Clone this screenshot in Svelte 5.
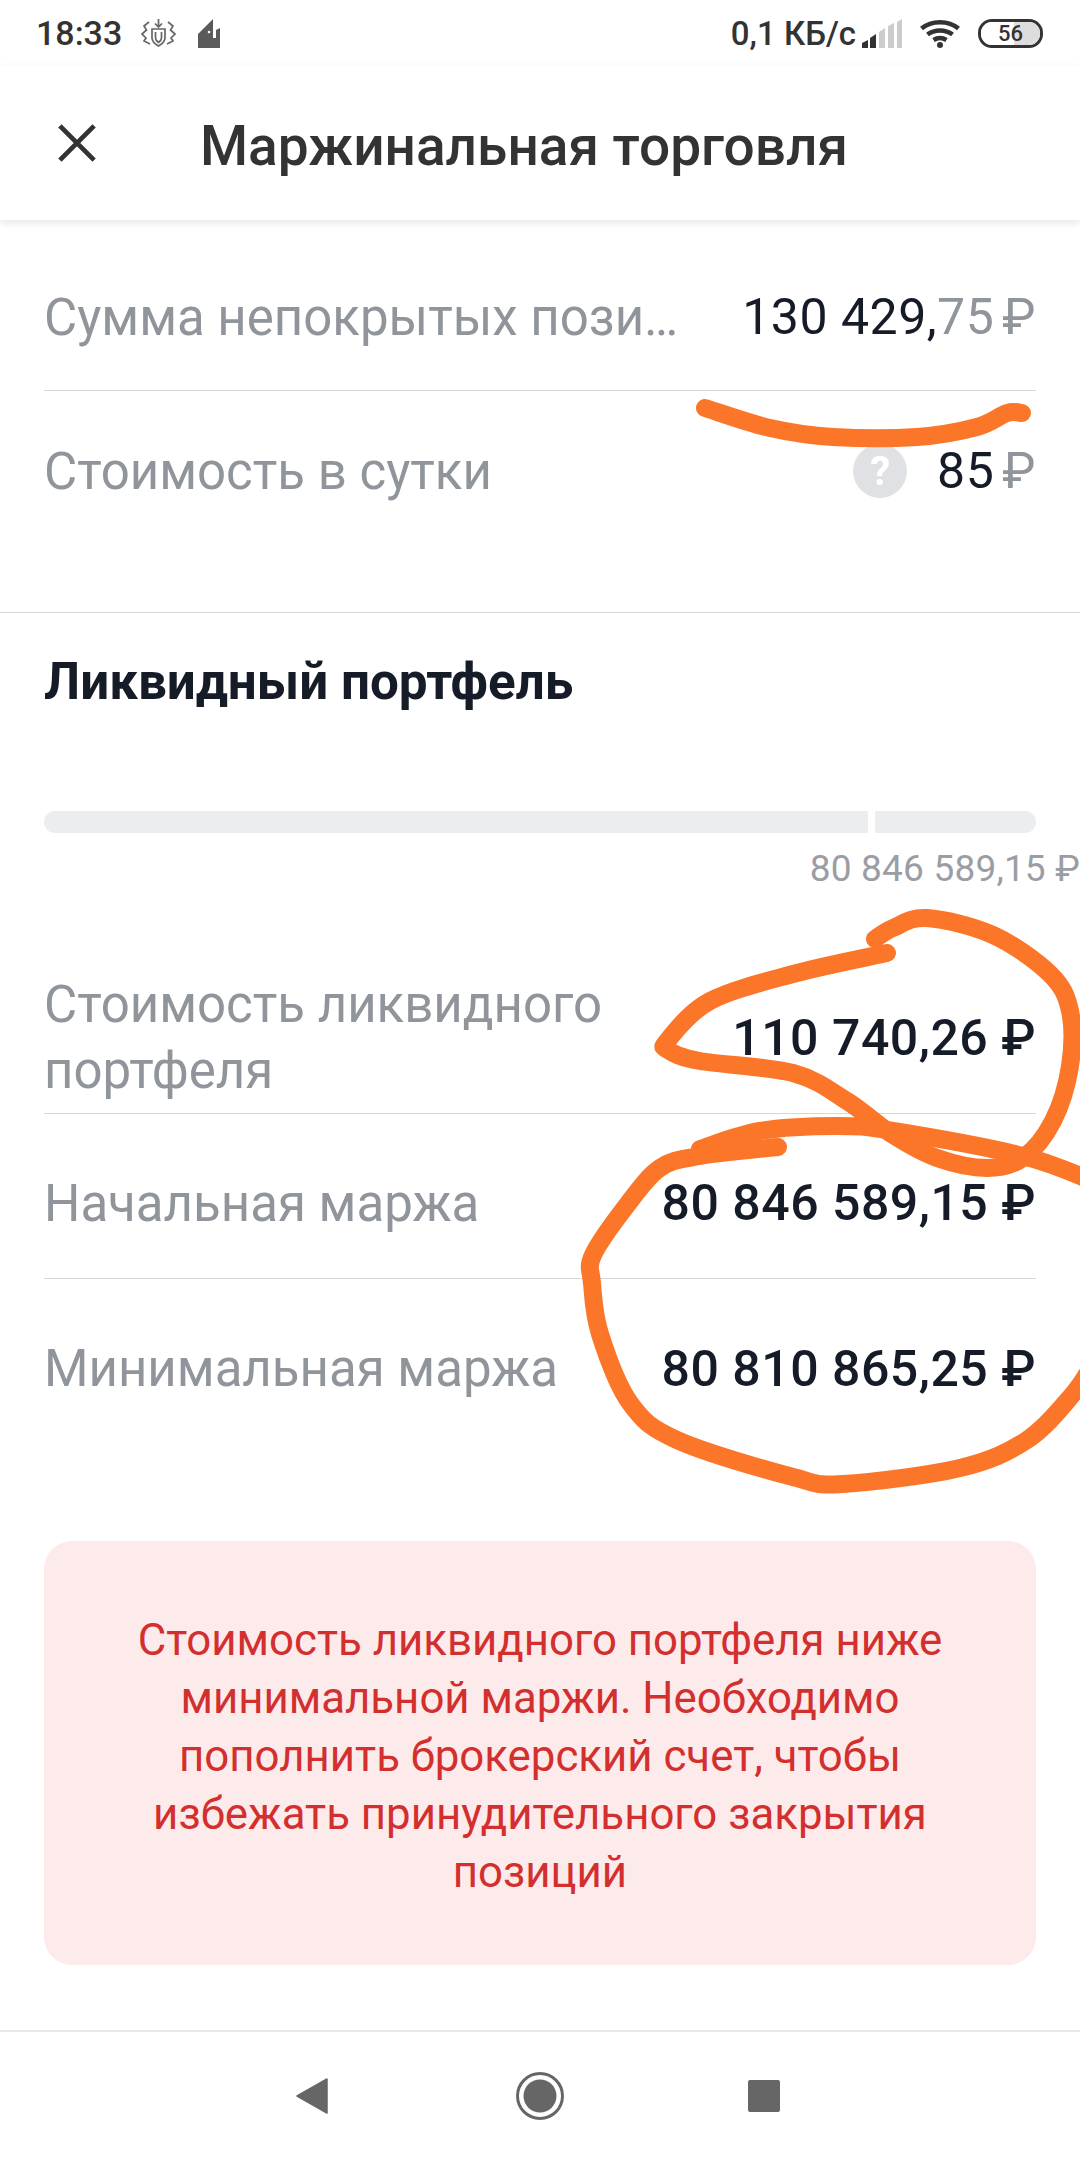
<script>
  function smooth(p) {
    let d = `M${p[0][0]} ${p[0][1]}`;
    for (let i = 0; i < p.length - 1; i++) {
      const a = p[i - 1] || p[i], b = p[i], c = p[i + 1], e = p[i + 2] || c;
      d += ` C${b[0] + (c[0] - a[0]) / 6} ${b[1] + (c[1] - a[1]) / 6} ${c[0] - (e[0] - b[0]) / 6} ${c[1] - (e[1] - b[1]) / 6} ${c[0]} ${c[1]}`;
    }
    return d;
  }
  const strokes = [
    [[705,408],[770,428],[833,437],[917,437],[977,427],[1007,413],[1022,413]],
    [[887,953],[793,974],[710,1001],[668,1040],[668,1050],[700,1061],[793,1073],[847,1101],[893,1135],[937,1158],[987,1168],[1023,1158],[1053,1121],[1070,1066],[1070,1011],[1050,974],[993,935],[927,918],[893,928],[875,939]],
    [[778,1147],[700,1156],[660,1168],[627,1205],[593,1255],[592,1283],[600,1334],[630,1403],[677,1440],[793,1477],[843,1484],[960,1468],[1027,1440],[1073,1394],[1095,1361]],
    [[1095,1182],[1023,1156],[893,1131],[837,1126],[760,1131],[700,1149]]
  ].map(smooth);
</script>

<div class="screen">
  <div class="status">
    <span class="time">18:33</span>
    <svg class="s1" viewBox="0 0 35 30" fill="none" stroke="#666" stroke-width="1.7">
      <path d="M17.5 1v7M14 5.5l3.5 3.5L21 5.5"/>
      <path d="M11 11h13v9c0 4-3 6-6.500 8-3.500-2-6.500-4-6.500-8z"/>
      <path d="M14.500 14v6c0 2 1 3 3 4.500 2-1.500 3-2.500 3-4.500v-6"/>
      <path d="M8 4L3 8l2.500 4L1 16l4 4-2 3 6 3M27 4l5 4-2.500 4 4.500 4-4 4 2 3-6 3"/>
    </svg>
    <svg class="s2" viewBox="0 0 22 29"><path d="M0 15L15 0V19H18V11L22 9V29H0z" fill="#5a5a5a"/><circle cx="11" cy="13" r="1.300" fill="#fff"/></svg>
    <span class="spacer"></span>
    <span class="speed">0,1 КБ/с</span>
    <svg class="signal" viewBox="0 0 41 29">
      <path d="M0 29v-5l6-3v8zM8 29V19l6-4v14z" fill="#333"/>
      <path d="M17 29V13l6-4v20zM26 29V7l6-3v25zM35 29V3l5-3v29z" fill="#ccc"/>
    </svg>
    <svg class="wifi" viewBox="0 0 40 29" fill="none" stroke="#333" stroke-width="4.500">
      <path d="M1.500 9.500c10-8.500 27-8.500 37 0M7.500 15.500c7-5.500 18-5.500 25 0M13.500 21c4-2.500 9-2.500 13 0"/><circle cx="20" cy="26" r="3" fill="#333" stroke="none"/>
    </svg>
    <div class="battery"><span class="fill"></span><span class="num">56</span></div>
  </div>

  <header class="top">
    <svg class="close" viewBox="0 0 40 40" fill="none" stroke="#333" stroke-width="5"><path d="M2 2l36 36M38 2L2 38"/></svg>
    <h1>Маржинальная торговля</h1>
  </header>

  <main>
    <div class="row first">
      <span class="label">Сумма непокрытых пози…</span>
      <span class="val">130 429,<i>75</i><i class="rub">₽</i></span>
    </div>
    <div class="row second">
      <span class="label">Стоимость в сутки</span>
      <span class="q">?</span>
      <span class="val">85<i class="rub">₽</i></span>
    </div>

    <section class="liquid">
      <h2>Ликвидный портфель</h2>
      <div class="bar"><span class="a"></span><span class="b"></span></div>
      <div class="barlabel">80 846 589,15 ₽</div>

      <div class="row tall">
        <span class="label two">Стоимость ликвидного<br>портфеля</span>
        <span class="val strong">110 740,26 ₽</span>
      </div>
      <div class="row mid">
        <span class="label">Начальная маржа</span>
        <span class="val strong">80 846 589,15 ₽</span>
      </div>
      <div class="row mid last">
        <span class="label">Минимальная маржа</span>
        <span class="val strong">80 810 865,25 ₽</span>
      </div>

      <div class="alert">Стоимость ликвидного портфеля ниже минимальной маржи. Необходимо пополнить брокерский счет, чтобы избежать принудительного закрытия позиций</div>
    </section>
  </main>

  <nav>
    <svg class="n1" viewBox="0 0 32 36"><path d="M31 1v34L1 18z" fill="#666" stroke="#666" stroke-width="1.5" stroke-linejoin="round"/></svg>
    <svg class="n2" viewBox="0 0 48 48"><circle cx="24" cy="24" r="22.5" fill="none" stroke="#666" stroke-width="3"/><circle cx="24" cy="24" r="16.5" fill="#666"/></svg>
    <span class="n3"></span>
  </nav>

  <svg class="ink" viewBox="0 0 1080 2160" fill="none" stroke="#fb7628" stroke-width="18" stroke-linecap="round" stroke-linejoin="round">
    {#each strokes as d}<path {d}/>{/each}
  </svg>
</div>

<style>
  :global(body) { margin: 0; background: #fff; }
  .screen { position: relative; width: 1080px; height: 2160px; overflow: hidden; background: #fff; font-family: Roboto, "Noto Sans", sans-serif; color: #151c28; display: flex; flex-direction: column; }
  .status { height: 66px; box-sizing: border-box; display: flex; align-items: center; padding: 0 37px 0 36px; color: #333; font-weight: 500; font-size: 34px; flex: none; }
  .time { width: 105px; }
  .s1 { width: 35px; height: 30px; }
  .s2 { width: 22px; height: 29px; margin-left: 22px; }
  .spacer { flex: 1; }
  .speed { margin-right: 6px; font-size: 33px; }
  .signal { width: 41px; height: 29px; margin-right: 17px; }
  .wifi { width: 40px; height: 29px; margin-right: 18px; }
  .battery { position: relative; width: 65px; height: 29px; box-sizing: border-box; border: 3px solid #333; border-radius: 14px; overflow: hidden; display: flex; align-items: center; justify-content: center; font-size: 22px; }
  .fill { position: absolute; left: 0; top: 0; bottom: 0; right: 0; background: linear-gradient(90deg, #fff 56%, #ddd 56%); }
  .num { position: relative; }
  .top { height: 154px; flex: none; display: flex; align-items: center; box-sizing: border-box; padding-left: 58px; box-shadow: 0 3px 8px rgba(0,0,0,.1); position: relative; color: #333; }
  .close { width: 38px; height: 38px; margin-right: 104px; }
  h1 { margin: 6px 0 0; font-size: 55px; font-weight: 500; color: #333; }
  main { flex: 1; padding-top: 24px; }
  .row { display: flex; align-items: center; justify-content: space-between; margin: 0 44px; box-sizing: border-box; border-bottom: 1px solid #d4d6d9; }
  .label { font-size: 51px; color: #90959c; min-width: 0; margin-right: auto; white-space: nowrap; }
  .val { font-size: 50px; white-space: nowrap; letter-spacing: .5px; }
  .val i { font-style: normal; color: #90959c; }
  .val .rub { margin-left: 8px; }
  .first { height: 147px; }
  .second { height: 160px; border-bottom: none; }
  .q { width: 54px; height: 54px; border-radius: 50%; background: #dfe1e4; color: #fff; font-weight: 700; font-size: 40px; display: flex; align-items: center; justify-content: center; margin-right: 30px; }
  .liquid { margin-top: 61px; border-top: 1px solid #d4d6d9; }
  h2 { margin: 0; padding: 44px 44px 0; height: 154px; box-sizing: border-box; font-size: 51.2px; font-weight: 700; line-height: 50px; }
  .bar { display: flex; gap: 7px; margin: 44px 44px 0; height: 22px; }
  .a { width: 824px; background: #ebedef; border-radius: 11px 0 0 11px; }
  .b { flex: 1; background: #ebedef; border-radius: 0 11px 11px 0; }
  .barlabel { text-align: right; font-size: 37px; color: #9a9ea4; margin-top: 16px; height: 40px; line-height: 40px; letter-spacing: .2px; }
  .tall { margin-top: 60px; height: 165px; padding-top: 14px; }
  .two { line-height: 66px; }
  .mid { height: 165px; padding-top: 14px; }
  .last { border-bottom: none; }
  .strong { font-weight: 500; }
  .alert { margin: 97px 44px 0; height: 424px; box-sizing: border-box; background: #fdeaea; border-radius: 28px; padding: 70px 60px 0; color: #d32f2f; font-size: 43.8px; line-height: 58px; text-align: center; }
  nav { height: 130px; flex: none; border-top: 2px solid #e8e8e8; box-sizing: border-box; display: flex; align-items: center; position: relative; padding-left: 296px; }
  .n1 { width: 32px; height: 36px; }
  .n2 { width: 48px; height: 48px; margin-left: 188px; }
  .n3 { width: 32px; height: 32px; margin-left: 184px; background: #666; border-radius: 2px; }
  .ink { position: absolute; left: 0; top: 0; width: 1080px; height: 2160px; pointer-events: none; }
</style>
